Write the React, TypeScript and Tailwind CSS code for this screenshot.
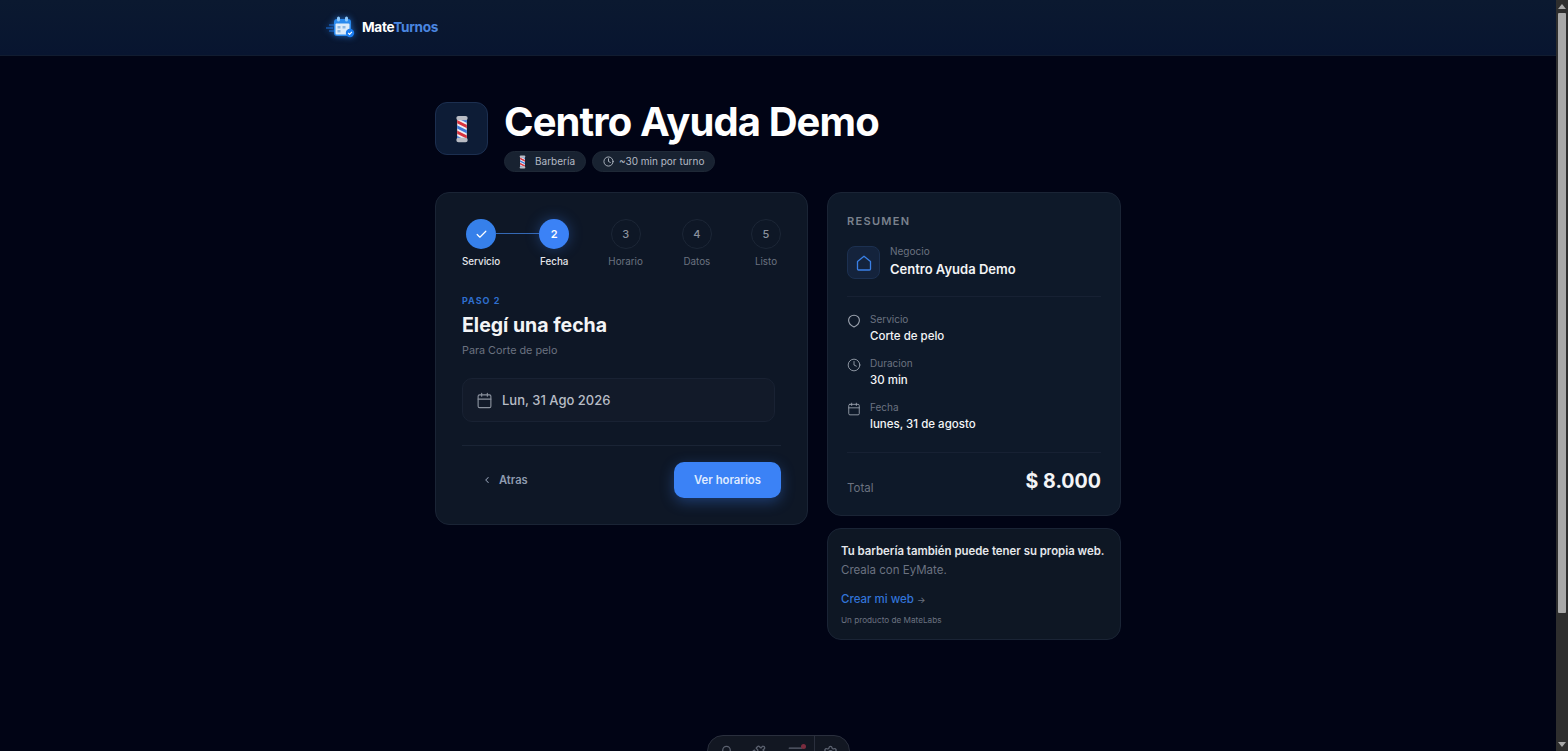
import { Bell, Calendar, Check, ChevronLeft, Clock, ListFilter, Puzzle, Settings } from "lucide-react";

const steps = [
  { label: "Servicio", state: "done" },
  { label: "Fecha", state: "active", n: 2 },
  { label: "Horario", state: "todo", n: 3 },
  { label: "Datos", state: "todo", n: 4 },
  { label: "Listo", state: "todo", n: 5 },
];

const BarberPole = ({ className, id }: { className: string; id: string }) => (
  <svg viewBox="0 0 16 32" className={className}>
    <defs>
      <clipPath id={id}>
        <rect x="2.5" y="5" width="11" height="22" />
      </clipPath>
    </defs>
    <rect x="2.5" y="5" width="11" height="22" fill="#f1f1f4" />
    <g clipPath={`url(#${id})`} strokeWidth="3.2" fill="none">
      <path d="M1 7 L15 14" stroke="#d8343f" />
      <path d="M1 13 L15 20" stroke="#3d78d8" />
      <path d="M1 19 L15 26" stroke="#d8343f" />
      <path d="M1 25 L15 32" stroke="#3d78d8" />
      <path d="M1 1 L15 8" stroke="#3d78d8" />
    </g>
    <rect x="1.5" y="1" width="13" height="5" rx="2.5" fill="#b9bcc4" />
    <rect x="1.5" y="26" width="13" height="5" rx="2.5" fill="#b9bcc4" />
  </svg>
);

const Logo = () => (
  <svg viewBox="0 0 32 24" className="h-[24px] w-[32px] drop-shadow-[0_0_3px_rgba(40,130,240,0.7)]">
    <path d="M0 13h7M3 10h5M3 16h5" stroke="#1d6fd6" strokeWidth="1.4" opacity="0.7" />
    <rect x="8" y="4" width="17" height="17" rx="3" fill="#2a8aee" />
    <rect x="11" y="1.5" width="3" height="5" rx="1.5" fill="#8cc8fb" />
    <rect x="19" y="1.5" width="3" height="5" rx="1.5" fill="#8cc8fb" />
    <rect x="9.5" y="8.5" width="14" height="11" rx="1" fill="#dcebfa" />
    <rect x="11.5" y="11" width="3" height="2.5" fill="#8fb8e0" />
    <rect x="16.5" y="11" width="3" height="2.5" fill="#8fb8e0" />
    <rect x="11.5" y="15" width="3" height="2.5" fill="#8fb8e0" />
    <circle cx="24" cy="18" r="4.2" fill="#1a7cf0" />
    <path d="M22.2 18l1.4 1.4 2.3-2.5" stroke="#fff" strokeWidth="1.1" fill="none" />
  </svg>
);

const Row = ({ icon, label, value }: { icon: React.ReactNode; label: string; value: string }) => (
  <div className="flex gap-[9px]">
    <div className="mt-[3px] w-[14px] text-[#9ca3af]">{icon}</div>
    <div>
      <p className="text-[10px] leading-[16px] text-[#6b7280]">{label}</p>
      <p className="text-[11.5px] font-medium leading-[18px] text-[#f3f4f6]">{value}</p>
    </div>
  </div>
);

const App = () => {
  return (
    <div className="relative flex h-[751px] overflow-hidden bg-[#010415] font-['Inter',sans-serif]">
      <div className="min-w-0 flex-1">
        <header className="h-[56px] border-b border-[#111c30] bg-gradient-to-b from-[#0b1930] to-[#081530]">
          <div className="mx-auto flex h-[54px] w-[904px] items-center gap-[4px]">
            <Logo />
            <p className="text-[13.6px] font-bold tracking-[-0.3px] text-white">
              Mate<span className="text-[#4a86e0]">Turnos</span>
            </p>
          </div>
        </header>

        <main className="mx-auto w-[686px] pt-[46px]">
          <div className="flex gap-[16px]">
            <div className="flex h-[53px] w-[53px] items-center justify-center rounded-[12px] border border-[#1c2f50] bg-[#0d1c36]">
              <BarberPole id="pole-big" className="h-[28px] w-[14px]" />
            </div>
            <div>
              <h1 className="text-[40px] font-bold leading-[40px] tracking-[-0.9px] text-white">Centro Ayuda Demo</h1>
              <div className="mt-[9px] flex gap-[6px]">
                <span className="flex h-[21px] items-center gap-[9px] rounded-full border border-[#1f2937] bg-[#182231] pl-[14px] pr-[10px] text-[10px] text-[#b4bac5]">
                  <BarberPole id="pole-small" className="h-[14px] w-[7px]" />
                  Barbería
                </span>
                <span className="flex h-[21px] items-center gap-[5px] rounded-full border border-[#1f2937] bg-[#182231] pl-[10px] pr-[10px] text-[10px] text-[#b4bac5]">
                  <Clock size={11} />
                  ~30 min por turno
                </span>
              </div>
            </div>
          </div>

          <div className="mt-[20px] flex items-start gap-[19px]">
            <section className="h-[333px] w-[373px] rounded-[14px] border border-[#1a2435] bg-[#0e1726] px-[26px] pt-[26px]">
              <div className="flex justify-between">
                {steps.map((step, index) => (
                  <div key={step.label} className="relative flex flex-col items-center">
                    {step.state === "done" && (
                      <div className="absolute left-[34px] top-[14px] h-[1px] w-[43px] bg-[#3468b4]" />
                    )}
                    {step.state === "done" ? (
                      <div className="flex h-[30px] w-[30px] items-center justify-center rounded-full bg-[#3680ea] text-white">
                        <Check size={13} strokeWidth={2.2} />
                      </div>
                    ) : step.state === "active" ? (
                      <div className="flex h-[30px] w-[30px] items-center justify-center rounded-full bg-[#3b82f6] text-[11px] font-semibold text-white shadow-[0_0_14px_rgba(59,130,246,0.35)]">
                        {step.n}
                      </div>
                    ) : (
                      <div className="flex h-[30px] w-[30px] items-center justify-center rounded-full border border-[#1c2636] bg-[#0e1726] text-[11px] font-medium text-[#8a919d]">
                        {step.n}
                      </div>
                    )}
                    <p
                      className={`mt-[6px] text-[9.8px] leading-[14px] ${
                        index < 2 ? "font-medium text-[#e5e7eb]" : "text-[#6b7280]"
                      }`}
                    >
                      {step.label}
                    </p>
                  </div>
                ))}
              </div>

              <p className="mt-[26px] text-[9px] font-bold leading-[12px] tracking-[1px] text-[#2f6fce]">PASO 2</p>
              <h2 className="mt-[5px] text-[19.5px] font-bold leading-[26px] text-[#f3f4f6]">Elegí una fecha</h2>
              <p className="mt-[5px] text-[10.8px] leading-[16px] text-[#6b7280]">Para Corte de pelo</p>

              <div className="mt-[19px] flex h-[44px] w-[313px] items-center gap-[9px] rounded-[10px] border border-[#192233] bg-[#121a29] px-[13px]">
                <Calendar size={17} strokeWidth={1.6} className="text-[#8a919d]" />
                <span className="mt-[1px] text-[13px] font-medium text-[#b8bdc6]">Lun, 31 Ago 2026</span>
              </div>

              <div className="mt-[23px] border-t border-[#1a2435]" />

              <div className="mt-[16px] flex items-center justify-between">
                <button className="ml-[20px] flex items-center gap-[7px] text-[11.2px] font-semibold text-[#8f9bb0]">
                  <ChevronLeft size={10} strokeWidth={2.5} />
                  Atras
                </button>
                <button className="flex h-[36px] w-[107px] items-center justify-center rounded-[10px] bg-[#3b82f6] text-[11.3px] font-semibold text-[#dfeaff] shadow-[0_4px_14px_rgba(59,130,246,0.35)]">
                  Ver horarios
                </button>
              </div>
            </section>

            <div className="flex w-[294px] flex-col gap-[12px]">
              <section className="h-[324px] rounded-[14px] border border-[#1a2435] bg-[#0e1929] px-[19px] pt-[21px]">
                <p className="text-[11px] font-semibold leading-[14px] tracking-[1.3px] text-[#7b828e]">RESUMEN</p>
                <div className="mt-[18px] flex gap-[10px]">
                  <div className="flex h-[33px] w-[33px] items-center justify-center rounded-[8px] border border-[#1c3050] bg-[#14233c] text-[#3a80e6]">
                    <svg viewBox="0 0 18 18" className="h-[18px] w-[18px]" fill="none" stroke="currentColor" strokeWidth="1.3" strokeLinejoin="round">
                      <path d="M2.5 7.6 9 2.2l6.5 5.4V15a1 1 0 0 1-1 1h-11a1 1 0 0 1-1-1z" />
                    </svg>
                  </div>
                  <div>
                    <p className="text-[10px] leading-[11px] text-[#6b7280]">Negocio</p>
                    <p className="mt-[2px] text-[13px] font-semibold leading-[20px] text-[#f3f4f6]">Centro Ayuda Demo</p>
                  </div>
                </div>
                <div className="mt-[17px] border-t border-[#172133]" />
                <div className="mt-[14px] flex flex-col gap-[10px]">
                  <Row
                    icon={
                      <svg viewBox="0 0 14 14" className="h-[14px] w-[14px]" fill="none" stroke="currentColor" strokeWidth="1.1">
                        <path d="M7 13C4 11.6 1.6 9 1.6 6.2 1.6 3.2 4 1.2 7 1.2s5.4 2 5.4 5C12.4 9 10 11.6 7 13z" />
                      </svg>
                    }
                    label="Servicio"
                    value="Corte de pelo"
                  />
                  <Row icon={<Clock size={14} strokeWidth={1.5} />} label="Duracion" value="30 min" />
                  <Row icon={<Calendar size={14} strokeWidth={1.5} />} label="Fecha" value="lunes, 31 de agosto" />
                </div>
                <div className="mt-[19px] border-t border-[#172133]" />
                <div className="mt-[14px] flex items-end justify-between">
                  <p className="mb-[-1px] text-[11.5px] leading-[16px] text-[#6b7280]">Total</p>
                  <p className="text-[19.6px] font-bold leading-[28px] text-[#f3f4f6]">$ 8.000</p>
                </div>
              </section>

              <section className="h-[112px] rounded-[14px] border border-[#1a2435] bg-[#0e1724] px-[13px] pt-[13px]">
                <p className="text-[11.4px] font-semibold leading-[18px] text-[#e5e7eb]">
                  Tu barbería también puede tener su propia web.
                </p>
                <p className="mt-[1px] text-[11.5px] leading-[18px] text-[#6b7280]">Creala con EyMate.</p>
                <p className="mt-[11px] text-[11.5px] font-medium leading-[18px] text-[#3274d8]">
                  Crear mi web <span className="text-[9px] text-[#6b7280]">→</span>
                </p>
                <p className="mt-[4px] text-[8.2px] leading-[14px] text-[#6b7280]">Un producto de MateLabs</p>
              </section>
            </div>
          </div>
        </main>
      </div>

      <div className="flex w-[12px] flex-col items-center justify-between bg-[#2e2e2e] py-[4px]">
        <div className="flex w-full flex-col items-center">
          <div className="h-0 w-0 border-x-[4px] border-b-[5px] border-x-transparent border-b-[#a8a8a8]" />
          <div className="mt-[4px] h-[600px] w-[8px] rounded-[1px] bg-[#a8a8a8]" />
        </div>
        <div className="h-0 w-0 border-x-[4px] border-t-[5px] border-x-transparent border-t-[#a8a8a8]" />
      </div>

      <div className="absolute left-[707px] top-[735px] flex h-[40px] w-[143px] items-start rounded-[16px] border border-[#2a2f3d] bg-[#121722] pl-[11px] pt-[9px] text-[#5c6270]">
        <Bell size={15} />
        <Puzzle size={15} className="ml-[17px]" />
        <div className="relative ml-[22px]">
          <ListFilter size={15} />
          <div className="absolute right-[-3px] top-[-1px] h-[5px] w-[5px] rounded-full bg-[#7a2c3e]" />
        </div>
        <div className="ml-[11px] mt-[-9px] h-[40px] w-[1px] bg-[#2a2f3d]" />
        <Settings size={15} className="ml-[8px]" />
      </div>
    </div>
  );
};

export default App;
